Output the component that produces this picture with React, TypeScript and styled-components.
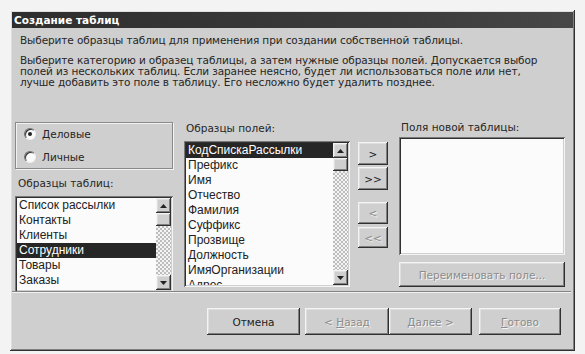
import React from "react";
import styled, { createGlobalStyle, css } from "styled-components";

const GlobalStyle = createGlobalStyle`
  html, body {
    margin: 0;
    padding: 0;
    background: #f3f3f3;
  }
  body {
    font-family: "DejaVu Sans", Verdana, sans-serif;
    font-size: 10.5px;
    color: #262626;
  }
`;

const raised = css`
  box-shadow:
    inset -1px -1px #303030,
    inset 1px 1px #f4f4f4,
    inset -2px -2px #808080,
    inset 2px 2px #dedede;
`;

const sunken = css`
  box-shadow:
    inset 1px 1px #7a7a7a,
    inset -1px -1px #f4f4f4,
    inset 2px 2px #303030,
    inset -2px -2px #d0d0d0;
`;

const Page = styled.div`
  padding: 10px 0 0 10px;
`;

const Dialog = styled.div`
  width: 565px;
  height: 341px;
  box-sizing: border-box;
  background: #cfcfcf;
  display: flex;
  flex-direction: column;
  ${raised};
  padding: 2px;
`;

const TitleBar = styled.div`
  height: 16px;
  background: linear-gradient(90deg, #2e2e2e, #3c3c3c 70%, #474747);
  color: #fff;
  font-weight: bold;
  font-size: 10.5px;
  line-height: 16px;
  padding-left: 2px;
`;

const Intro = styled.div`
  padding: 7px 0 0 8px;
  line-height: 11px;
  letter-spacing: -0.1px;
`;

const Para = styled.p<{ $gap?: number }>`
  margin: 0 0 ${({ $gap }) => $gap ?? 0}px 0;
`;

const Main = styled.div<{ $top: number }>`
  display: flex;
  align-items: flex-start;
  padding: 0 0 0 3px;
  margin-top: ${({ $top }) => $top}px;
  height: 177px;
`;

const Column = styled.div<{ $width: number; $pad: number; $ml: number }>`
  width: ${({ $width }) => $width}px;
  margin-left: ${({ $ml }) => $ml}px;
  padding-top: ${({ $pad }) => $pad}px;
  display: flex;
  flex-direction: column;
`;

const GroupBox = styled.div`
  height: 47px;
  box-sizing: border-box;
  border: 1px solid #8a8a8a;
  box-shadow: 1px 1px #f2f2f2, inset 1px 1px #f2f2f2;
  padding: 4px 0 0 8px;
  display: flex;
  flex-direction: column;
  gap: 9px;
`;

const RadioRow = styled.label`
  display: flex;
  align-items: center;
  gap: 6px;
  height: 14px;
`;

const RadioCircle = styled.span<{ $checked?: boolean }>`
  width: 12px;
  height: 12px;
  border-radius: 50%;
  box-sizing: border-box;
  background: #fafafa;
  border: 1px solid;
  border-color: #707070 #f0f0f0 #f0f0f0 #707070;
  box-shadow: inset 1px 1px #333;
  display: flex;
  align-items: center;
  justify-content: center;
  &::after {
    content: "";
    width: 4px;
    height: 4px;
    border-radius: 50%;
    background: ${({ $checked }) => ($checked ? "#222" : "transparent")};
  }
`;

const Label = styled.div<{ $mb: number; $ml?: number; $mt?: number }>`
  line-height: 12px;
  margin-top: ${({ $mt }) => $mt ?? 0}px;
  margin-bottom: ${({ $mb }) => $mb}px;
  margin-left: ${({ $ml }) => $ml ?? 2}px;
`;

const ListBox = styled.div<{ $height: number }>`
  height: ${({ $height }) => $height}px;
  box-sizing: border-box;
  background: #fbfbfb;
  ${sunken};
  padding: 2px;
  display: flex;
`;

const Items = styled.div`
  flex: 1;
  overflow: hidden;
  font-family: "Liberation Sans", Arial, sans-serif;
  font-size: 12px;
`;

const Item = styled.div<{ $selected?: boolean }>`
  height: 15px;
  line-height: 15px;
  padding-left: 2px;
  white-space: nowrap;
  color: #222;
  ${({ $selected }) =>
    $selected &&
    css`
      background: #262626;
      color: #fff;
    `}
`;

const ScrollBar = styled.div`
  width: 15px;
  display: flex;
  flex-direction: column;
  background-color: #f0f0f0;
  background-image: repeating-conic-gradient(#bdbdbd 0 25%, #f4f4f4 0 50%);
  background-size: 4px 4px;
`;

const ScrollButton = styled.div`
  height: 15px;
  background: #cfcfcf;
  ${raised};
  display: flex;
  align-items: center;
  justify-content: center;
`;

const Thumb = styled.div`
  height: 13px;
  background: #cfcfcf;
  ${raised};
`;

const Spacer = styled.div`
  flex: 1;
`;

const Arrow = ({ down }: { down?: boolean }) => (
  <svg width="7" height="4" viewBox="0 0 7 4">
    <polygon points={down ? "0,0 7,0 3.5,4" : "3.5,0 7,4 0,4"} fill="#222" />
  </svg>
);

const Scroller = () => (
  <ScrollBar>
    <ScrollButton>
      <Arrow />
    </ScrollButton>
    <Thumb />
    <Spacer />
    <ScrollButton>
      <Arrow down />
    </ScrollButton>
  </ScrollBar>
);

const Button = styled.div<{
  $width?: number;
  $height: number;
  $disabled?: boolean;
  $mt?: number;
  $ml?: number;
}>`
  width: ${({ $width }) => ($width ? `${$width}px` : "auto")};
  height: ${({ $height }) => $height}px;
  margin-top: ${({ $mt }) => $mt ?? 0}px;
  margin-left: ${({ $ml }) => $ml ?? 0}px;
  box-sizing: border-box;
  background: #cfcfcf;
  ${raised};
  display: flex;
  align-items: center;
  justify-content: center;
  color: ${({ $disabled }) => ($disabled ? "#8c8c8c" : "#222")};
  text-shadow: ${({ $disabled }) => ($disabled ? "1px 1px #f4f4f4" : "none")};
  white-space: nowrap;
`;

const Separator = styled.div`
  height: 0;
  border-top: 1px solid #848484;
  border-bottom: 1px solid #f2f2f2;
  margin: 0 2px 0 0;
`;

const Footer = styled.div`
  display: flex;
  padding: 15px 0 0 195px;
`;

const tables = ["Список рассылки", "Контакты", "Клиенты", "Сотрудники", "Товары", "Заказы"];
const fields = [
  "КодСпискаРассылки",
  "Префикс",
  "Имя",
  "Отчество",
  "Фамилия",
  "Суффикс",
  "Прозвище",
  "Должность",
  "ИмяОрганизации",
  "Адрес",
];

export default function App() {
  return (
    <Page>
      <GlobalStyle />
      <Dialog>
        <TitleBar>Создание таблиц</TitleBar>
        <Intro>
          <Para $gap={9}>
            Выберите образцы таблиц для применения при создании собственной таблицы.
          </Para>
          <Para>
            Выберите категорию и образец таблицы, а затем нужные образцы полей. Допускается выбор
            <br />
            полей из нескольких таблиц. Если заранее неясно, будет ли использоваться поле или нет,
            <br />
            лучше добавить это поле в таблицу. Его несложно будет удалить позднее.
          </Para>
        </Intro>
        <Main $top={26}>
          <Column $width={158} $pad={8} $ml={0}>
            <GroupBox>
              <RadioRow>
                <RadioCircle $checked />
                Деловые
              </RadioRow>
              <RadioRow>
                <RadioCircle />
                Личные
              </RadioRow>
            </GroupBox>
            <Label $mt={8} $mb={7} $ml={3}>
              Образцы таблиц:
            </Label>
            <ListBox $height={96}>
              <Items>
                {tables.map((t) => (
                  <Item key={t} $selected={t === "Сотрудники"}>
                    {t}
                  </Item>
                ))}
              </Items>
              <Scroller />
            </ListBox>
          </Column>
          <Column $width={166} $pad={8} $ml={11}>
            <Label $mb={7}>Образцы полей:</Label>
            <ListBox $height={146}>
              <Items>
                {fields.map((f, i) => (
                  <Item key={f} $selected={i === 0}>
                    {f}
                  </Item>
                ))}
              </Items>
              <Scroller />
            </ListBox>
          </Column>
          <Column $width={30} $pad={28} $ml={8}>
            <Button $height={23}>&gt;</Button>
            <Button $height={23} $mt={2}>
              &gt;&gt;
            </Button>
            <Button $height={22} $mt={12} $disabled>
              &lt;
            </Button>
            <Button $height={21} $mt={3} $disabled>
              &lt;&lt;
            </Button>
          </Column>
          <Column $width={166} $pad={7} $ml={11}>
            <Label $mb={4}>Поля новой таблицы:</Label>
            <ListBox $height={118}>
              <Items />
            </ListBox>
            <Button $height={25} $mt={7} $disabled>
              Переименовать поле...
            </Button>
          </Column>
        </Main>
        <Separator />
        <Footer>
          <Button $width={93} $height={27}>
            Отмена
          </Button>
          <Button $width={84} $height={27} $ml={5} $disabled>
            &lt;&nbsp;<u>Н</u>азад
          </Button>
          <Button $width={83} $height={27} $disabled>
            <u>Д</u>алее&nbsp;&gt;
          </Button>
          <Button $width={82} $height={27} $ml={7} $disabled>
            <u>Г</u>отово
          </Button>
        </Footer>
      </Dialog>
    </Page>
  );
}
